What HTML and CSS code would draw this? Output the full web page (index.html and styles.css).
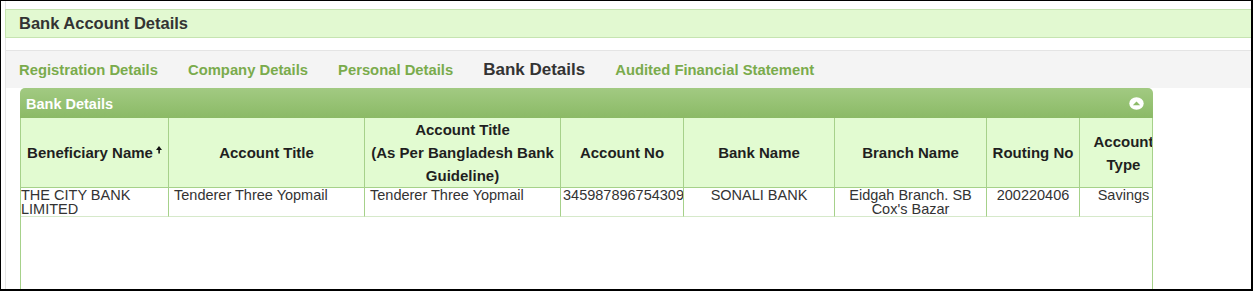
FILE: index.html
```html
<!DOCTYPE html>
<html>
<head>
<meta charset="utf-8">
<title>Bank Account Details</title>
<link rel="stylesheet" href="styles.css">
</head>
<body>
<div class="frame">
  <div class="page">
    <div class="title-bar">Bank Account Details</div>
    <div class="tabs">
      <span class="tab">Registration Details</span>
      <span class="tab">Company Details</span>
      <span class="tab">Personal Details</span>
      <span class="tab active">Bank Details</span>
      <span class="tab">Audited Financial Statement</span>
    </div>
    <div class="panel">
      <div class="panel-head">
        <span class="panel-title">Bank Details</span>
        <svg class="collapse" width="15" height="13" viewBox="0 0 15 13">
          <ellipse cx="7.5" cy="6.5" rx="7.2" ry="6.2" fill="#ffffff"/>
          <polygon points="3.8,8.2 11.2,8.2 7.5,4.4" fill="#8dbb69"/>
        </svg>
      </div>
      <div class="panel-body">
        <table class="grid">
          <thead>
            <tr>
              <th class="c1"><span>Beneficiary Name</span><svg class="sort" width="6" height="8" viewBox="0 0 6 8"><polygon points="0,4 6,4 3,0" fill="#111"/><rect x="2.3" y="3.5" width="1.6" height="4" fill="#111"/></svg></th>
              <th class="c2">Account Title</th>
              <th class="c3">Account Title<br>(As Per Bangladesh Bank<br>Guideline)</th>
              <th class="c4">Account No</th>
              <th class="c5">Bank Name</th>
              <th class="c6">Branch Name</th>
              <th class="c7">Routing No</th>
              <th class="c8">Account<br>Type</th>
            </tr>
          </thead>
          <tbody>
            <tr>
              <td class="first">THE CITY BANK LIMITED</td>
              <td>Tenderer Three Yopmail</td>
              <td>Tenderer Three Yopmail</td>
              <td class="clip">34598789675430987</td>
              <td class="center">SONALI BANK</td>
              <td class="center">Eidgah Branch. SB Cox's Bazar</td>
              <td class="center">200220406</td>
              <td class="center">Savings</td>
            </tr>
          </tbody>
        </table>
      </div>
    </div>
  </div>
</div>
</body>
</html>
```
FILE: styles.css
```css
html, body {
  margin: 0;
  padding: 0;
  background: #ffffff;
}

body {
  font-family: "Liberation Sans", Arial, sans-serif;
  color: #333333;
}

.frame {
  width: 1253px;
  height: 291px;
  box-sizing: border-box;
  border-top: 1px solid #000;
  border-left: 1px solid #000;
  border-right: 2px solid #000;
  border-bottom: 2px solid #000;
  overflow: hidden;
  background: #fff;
}

.page {
  margin-left: 4px;
  padding-top: 8px;
  border-left: 1px solid #e6e6e6;
  height: 100%;
  box-sizing: border-box;
}

.title-bar {
  margin-left: -1px;
  height: 27px;
  background: #e2f9d1;
  border: 1px solid #c6e4b1;
  border-right: none;
  padding-left: 13px;
  font-size: 16.5px;
  font-weight: bold;
  line-height: 27px;
  color: #333333;
}

.tabs {
  margin-top: 12px;
  height: 37px;
  background: #f4f4f4;
  border-top: 1px solid #e4e4e4;
  display: flex;
  align-items: center;
  gap: 30px;
  padding-left: 13px;
}

.tab {
  font-size: 14.8px;
  font-weight: bold;
  color: #7aab4c;
  white-space: nowrap;
}

.tab.active {
  font-size: 17px;
  color: #333333;
}

.panel {
  margin-left: 14px;
  width: 1133px;
}

.panel-head {
  height: 30px;
  box-sizing: border-box;
  border-radius: 5px 5px 0 0;
  background: linear-gradient(#a2ca82, #8bba66);
  display: flex;
  align-items: center;
  justify-content: space-between;
  padding: 1px 9px 0 6px;
}

.panel-title {
  color: #ffffff;
  font-size: 14.5px;
  font-weight: bold;
}

.collapse {
  display: block;
}

.panel-body {
  height: 200px;
  border-left: 1px solid #a6d18a;
  border-right: 1px solid #a6d18a;
  overflow: hidden;
}

.grid {
  border-collapse: separate;
  border-spacing: 0;
  table-layout: fixed;
  width: 1147px;
}

.grid th,
.grid td {
  box-sizing: border-box;
  border-right: 1px solid #a6d18a;
  overflow: hidden;
}

.grid th {
  background: #e2fbd1;
  border-bottom: 1px solid #a6d18a;
  font-size: 15px;
  font-weight: bold;
  color: #1f1f1f;
  line-height: 23px;
  padding: 0;
  text-align: center;
  vertical-align: middle;
  white-space: nowrap;
}

.grid th .sort {
  margin-left: 3px;
  vertical-align: 4px;
}

.c1 { width: 148px; }
.c2 { width: 196px; }
.c3 { width: 196px; }
.c4 { width: 123px; }
.c5 { width: 151px; }
.c6 { width: 152px; }
.c7 { width: 93px; }
.c8 { width: 88px; }

.grid td {
  font-size: 14.5px;
  line-height: 13.5px;
  color: #333333;
  padding: 1px 4px 0 5px;
  height: 29px;
  vertical-align: top;
  text-align: left;
  border-bottom: 1px solid #d6e9ca;
}

.grid td.first {
  padding-left: 0;
}

.grid td.clip {
  white-space: nowrap;
  padding-left: 2px;
  padding-right: 0;
}

.grid td.center {
  text-align: center;
  padding-left: 2px;
  padding-right: 2px;
}
```
